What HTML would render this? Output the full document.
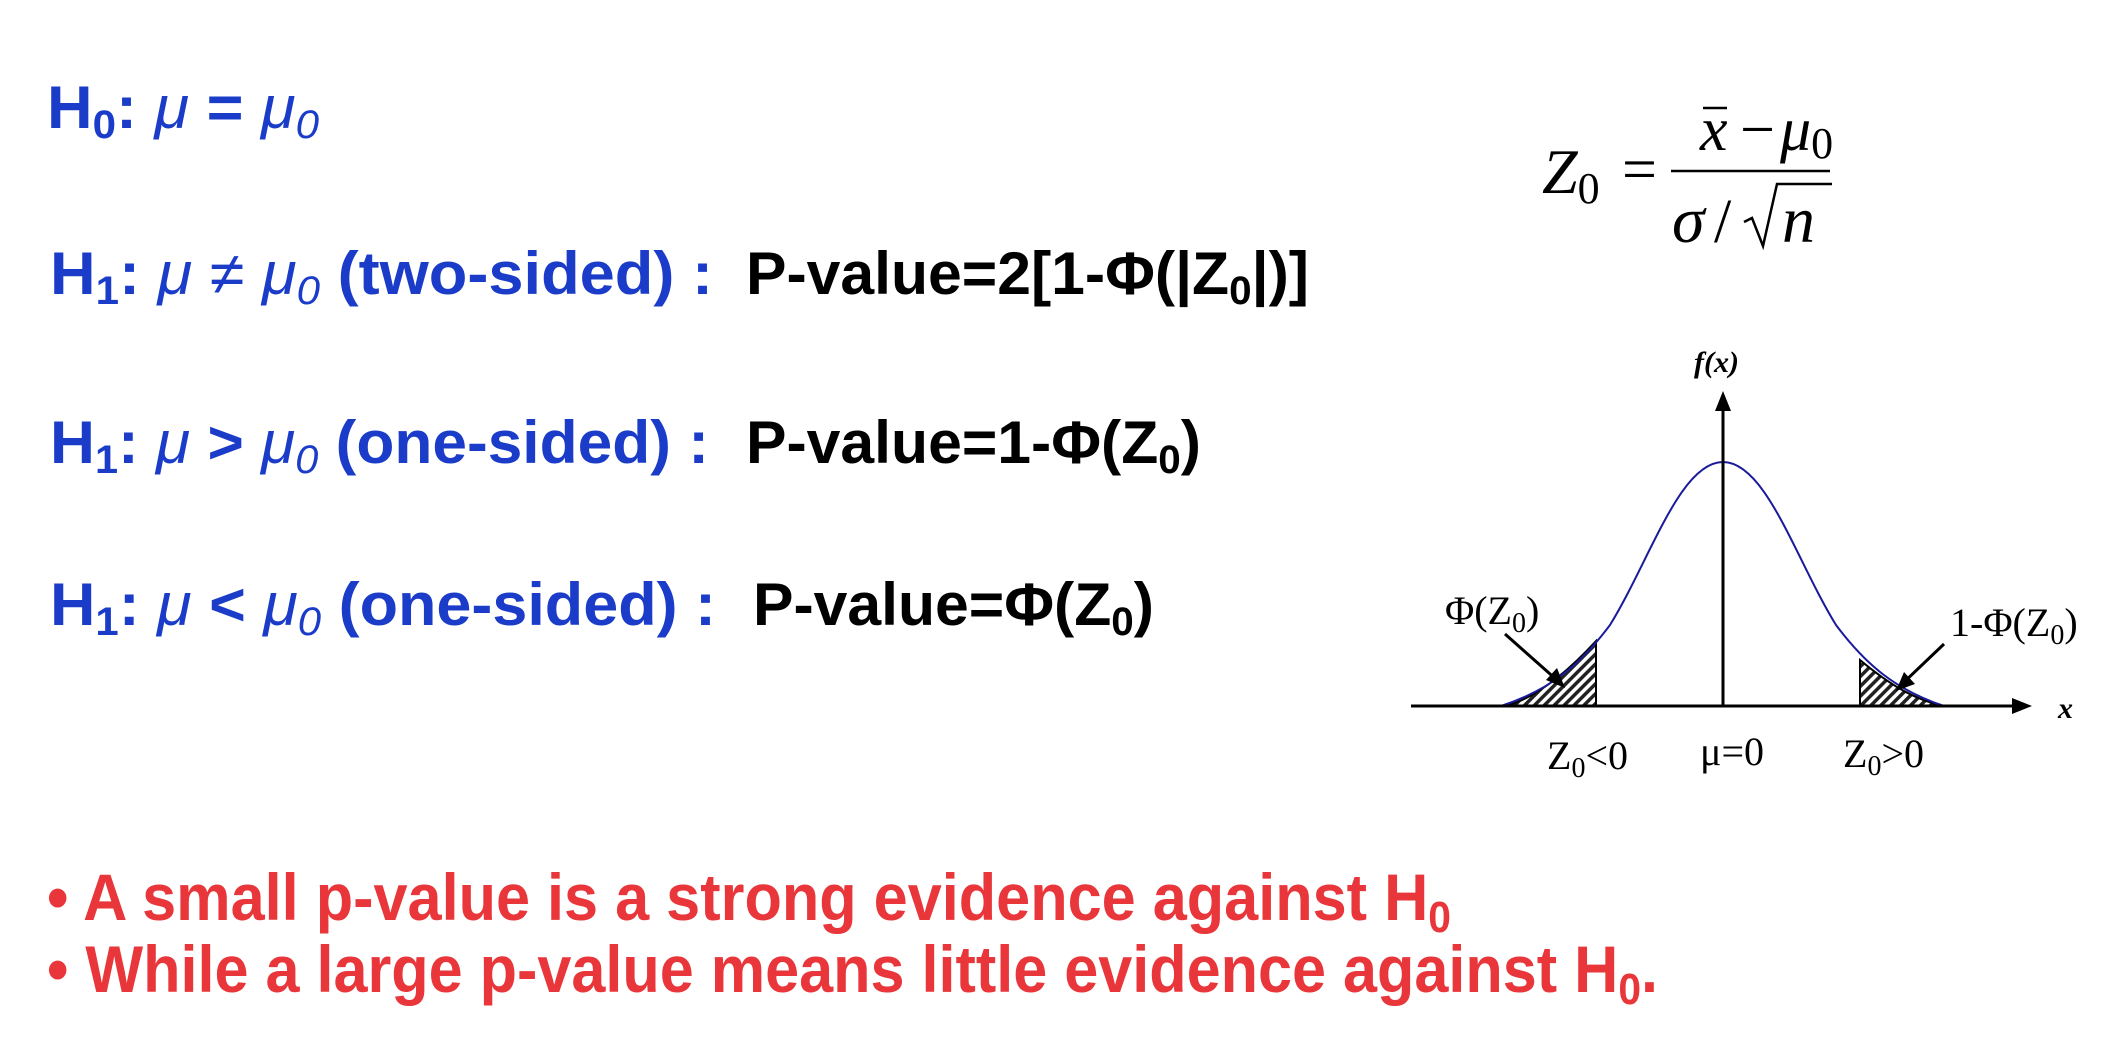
<!DOCTYPE html>
<html><head><meta charset="utf-8"><style>html,body{margin:0;padding:0;background:#fff}svg{display:block}</style></head>
<body>
<svg width="2116" height="1046" viewBox="0 0 2116 1046" xmlns="http://www.w3.org/2000/svg">
<defs>
<pattern id="h" width="7" height="7" patternUnits="userSpaceOnUse" patternTransform="rotate(45)">
<rect width="7" height="7" fill="#fff"/><rect width="3.5" height="7" fill="#222"/>
</pattern>
</defs>
<g font-family="Liberation Sans, sans-serif" font-weight="bold" font-size="60">
<text x="47" y="128" fill="#1a3cc8" textLength="272" lengthAdjust="spacingAndGlyphs">H<tspan font-size="40" dy="10">0</tspan><tspan dy="-10">: </tspan><tspan font-style="italic" font-weight="normal">μ</tspan> = <tspan font-style="italic" font-weight="normal">μ</tspan><tspan font-size="40" dy="10" font-style="italic" font-weight="normal">0</tspan></text>

<text x="50" y="294" fill="#1a3cc8" textLength="663" lengthAdjust="spacingAndGlyphs">H<tspan font-size="40" dy="10">1</tspan><tspan dy="-10">: </tspan><tspan font-style="italic" font-weight="normal">μ ≠ μ</tspan><tspan font-size="40" dy="10" font-style="italic" font-weight="normal">0</tspan><tspan dy="-10">  (two-sided) :</tspan></text>
<text x="746" y="294" fill="#000" textLength="563" lengthAdjust="spacingAndGlyphs">P-value=2[1-Φ(|Z<tspan font-size="40" dy="10">0</tspan><tspan dy="-10">|)]</tspan></text>

<text x="50" y="463" fill="#1a3cc8" textLength="659" lengthAdjust="spacingAndGlyphs">H<tspan font-size="40" dy="10">1</tspan><tspan dy="-10">: </tspan><tspan font-style="italic" font-weight="normal">μ</tspan> &gt; <tspan font-style="italic" font-weight="normal">μ</tspan><tspan font-size="40" dy="10" font-style="italic" font-weight="normal">0</tspan><tspan dy="-10">  (one-sided) :</tspan></text>
<text x="746" y="463" fill="#000" textLength="455" lengthAdjust="spacingAndGlyphs">P-value=1-Φ(Z<tspan font-size="40" dy="10">0</tspan><tspan dy="-10">)</tspan></text>

<text x="50" y="625" fill="#1a3cc8" textLength="666" lengthAdjust="spacingAndGlyphs">H<tspan font-size="40" dy="10">1</tspan><tspan dy="-10">: </tspan><tspan font-style="italic" font-weight="normal">μ</tspan> &lt; <tspan font-style="italic" font-weight="normal">μ</tspan><tspan font-size="40" dy="10" font-style="italic" font-weight="normal">0</tspan><tspan dy="-10">  (one-sided) :</tspan></text>
<text x="753" y="625" fill="#000" textLength="401" lengthAdjust="spacingAndGlyphs">P-value=Φ(Z<tspan font-size="40" dy="10">0</tspan><tspan dy="-10">)</tspan></text>

<text x="47" y="920" fill="#e8363a" font-size="66" textLength="1404" lengthAdjust="spacingAndGlyphs">• A small p-value is a strong evidence against H<tspan font-size="44" dy="12">0</tspan></text>
<text x="47" y="992" fill="#e8363a" font-size="66" textLength="1611" lengthAdjust="spacingAndGlyphs">• While a large p-value means little evidence against H<tspan font-size="44" dy="12">0</tspan><tspan dy="-12">.</tspan></text>
</g>

<g font-family="Liberation Serif, serif" fill="#000">
<text x="1542" y="193" font-size="64" font-style="italic">Z<tspan font-style="normal" font-size="44" dy="10">0</tspan></text>
<text x="1622" y="190" font-size="62">=</text>
<text x="1700" y="150" font-size="62" font-style="italic">x</text>
<line x1="1703" y1="108" x2="1727" y2="108" stroke="#000" stroke-width="2.5"/>
<text x="1740" y="150" font-size="62">−</text>
<text x="1780" y="150" font-size="62" font-style="italic">μ<tspan font-style="normal" font-size="44" dy="8">0</tspan></text>
<line x1="1671" y1="171" x2="1830" y2="171" stroke="#000" stroke-width="2.5"/>
<text x="1672" y="242" font-size="66" font-style="italic">σ</text>
<text x="1714" y="242" font-size="62">/</text>
<path d="M1744 222 L1752 218 L1763 246 L1777 184 L1832 184" fill="none" stroke="#000" stroke-width="2.5"/>
<text x="1782" y="242" font-size="66" font-style="italic">n</text>

<path d="M1505 706 C1530 700,1560 680,1596 641 L1596 706 Z" fill="url(#h)" stroke="#000" stroke-width="2"/>
<path d="M1860 660 C1890 685,1915 700,1944 706 L1860 706 Z" fill="url(#h)" stroke="#000" stroke-width="2"/>
<path d="M1501 706 C1550 690,1580 665,1610 625 C1650 560,1680 462,1723 462 C1766 462,1796 560,1836 625 C1866 665,1896 690,1944 706" fill="none" stroke="#1a1a9a" stroke-width="2"/>
<line x1="1411" y1="706" x2="2020" y2="706" stroke="#000" stroke-width="3"/>
<path d="M2032 706 L2012 698 L2012 714 Z"/>
<line x1="1723" y1="706" x2="1723" y2="405" stroke="#000" stroke-width="3"/>
<path d="M1723 391 L1715 411 L1731 411 Z"/>
<line x1="1505" y1="634" x2="1558" y2="681" stroke="#000" stroke-width="3"/>
<path d="M1565 688 L1546 680 L1557 668 Z"/>
<line x1="1944" y1="644" x2="1902" y2="684" stroke="#000" stroke-width="3"/>
<path d="M1896 691 L1904 672 L1915 684 Z"/>
<text x="1694" y="372" font-size="30" font-weight="bold" font-style="italic">f(x)</text>
<text x="2058" y="718" font-size="30" font-weight="bold" font-style="italic">x</text>
<text x="1445" y="624" font-size="40">Φ(Z<tspan font-size="28" dy="8">0</tspan><tspan dy="-8">)</tspan></text>
<text x="1950" y="636" font-size="40">1-Φ(Z<tspan font-size="28" dy="8">0</tspan><tspan dy="-8">)</tspan></text>
<text x="1547" y="769" font-size="40">Z<tspan font-size="28" dy="8">0</tspan><tspan dy="-8">&lt;0</tspan></text>
<text x="1700" y="765" font-size="40">μ=0</text>
<text x="1843" y="767" font-size="40">Z<tspan font-size="28" dy="8">0</tspan><tspan dy="-8">&gt;0</tspan></text>
</g>
</svg>
</body></html>
